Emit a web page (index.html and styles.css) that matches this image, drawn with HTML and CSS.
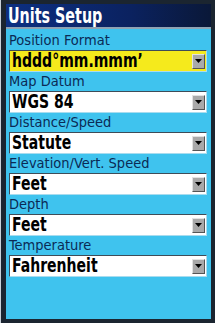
FILE: index.html
```html
<!DOCTYPE html>
<html lang="en">

<head>
    <meta charset="UTF-8">
    <meta name="viewport" content="width=device-width, initial-scale=1.0">
    <title>Units Setup</title>

    <link rel="stylesheet" href="styles.css">

</head>

<body>

    <div class="device">
        <div class="title"><span>Units Setup</span></div>
        <div class="page">
            <div class="field">
                <div class="label">Position Format</div>
                <div class="select active">
                    <span class="value">hddd°mm.mmm’</span>
                    <span class="drop"><svg width="7" height="4" viewBox="0 0 7 4"><polygon points="0,0 7,0 3.5,4" fill="#000"/></svg></span>
                </div>
            </div>
            <div class="field">
                <div class="label">Map Datum</div>
                <div class="select">
                    <span class="value">WGS 84</span>
                    <span class="drop"><svg width="7" height="4" viewBox="0 0 7 4"><polygon points="0,0 7,0 3.5,4" fill="#000"/></svg></span>
                </div>
            </div>
            <div class="field">
                <div class="label">Distance/Speed</div>
                <div class="select">
                    <span class="value">Statute</span>
                    <span class="drop"><svg width="7" height="4" viewBox="0 0 7 4"><polygon points="0,0 7,0 3.5,4" fill="#000"/></svg></span>
                </div>
            </div>
            <div class="field">
                <div class="label">Elevation/Vert. Speed</div>
                <div class="select">
                    <span class="value">Feet</span>
                    <span class="drop"><svg width="7" height="4" viewBox="0 0 7 4"><polygon points="0,0 7,0 3.5,4" fill="#000"/></svg></span>
                </div>
            </div>
            <div class="field">
                <div class="label">Depth</div>
                <div class="select">
                    <span class="value">Feet</span>
                    <span class="drop"><svg width="7" height="4" viewBox="0 0 7 4"><polygon points="0,0 7,0 3.5,4" fill="#000"/></svg></span>
                </div>
            </div>
            <div class="field">
                <div class="label">Temperature</div>
                <div class="select">
                    <span class="value">Fahrenheit</span>
                    <span class="drop"><svg width="7" height="4" viewBox="0 0 7 4"><polygon points="0,0 7,0 3.5,4" fill="#000"/></svg></span>
                </div>
            </div>
        </div>
    </div>

</body>

</html>
```

FILE: styles.css
```css
body {
    margin: 0;
    background-color: #1b2530;
}

.device {
    width: 215px;
    height: 323px;
    box-sizing: border-box;
    padding: 4px 4px 4px 5px;
    display: flex;
    flex-direction: column;
    background-color: #1b2530;
    border-left: 1px solid #c8d0d8;
}

.title {
    height: 23px;
    padding-left: 2px;
    background: linear-gradient(to right, #0c2f82, #0b2260 60%, #0a1838);
    border-bottom: 2px solid #8fa3b3;
    color: white;
    font-family: "DejaVu Sans Condensed", sans-serif;
    font-weight: bold;
    font-size: 21.5px;
    line-height: 23px;
}

.title span {
    display: inline-block;
    transform: scaleX(0.74);
    transform-origin: left center;
}

.page {
    flex: 1;
    background-color: #3fc3ee;
    padding: 2px 4px 0 3px;
}

.field .label {
    height: 19px;
    line-height: 18px;
    color: #0b2a55;
    font-family: "DejaVu Sans Condensed", sans-serif;
    font-size: 14.5px;
    white-space: nowrap;
}

.select {
    height: 22px;
    box-sizing: border-box;
    display: flex;
    align-items: center;
    justify-content: space-between;
    background-color: white;
    border-top: 1px solid #3e4c58;
    border-left: 1px solid #3e4c58;
    border-right: 1px solid #a8dcef;
    border-bottom: 1px solid #a8dcef;
    padding: 0 1px 0 2px;
}

.select.active {
    background-color: #f5ea1c;
}

.select .value {
    display: inline-block;
    transform: scaleX(0.8);
    transform-origin: left center;
    color: black;
    font-family: "DejaVu Sans Condensed", sans-serif;
    font-weight: bold;
    font-size: 19.5px;
    line-height: 20px;
}

.select .drop {
    width: 13px;
    height: 15px;
    box-sizing: border-box;
    display: flex;
    align-items: center;
    justify-content: center;
    background-color: #a9a9a9;
    border-top: 1px solid #e2e2e2;
    border-left: 1px solid #e2e2e2;
    border-right: 1px solid #555;
    border-bottom: 1px solid #555;
}
```
